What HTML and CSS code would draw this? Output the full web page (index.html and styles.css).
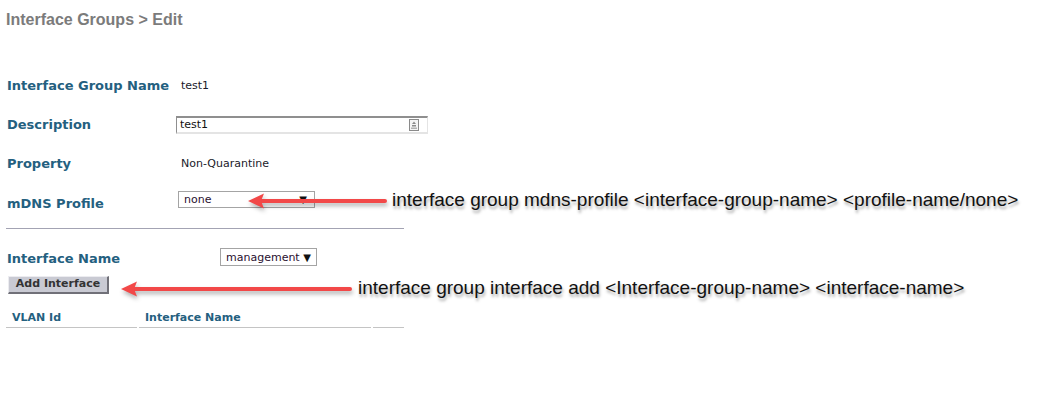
FILE: index.html
```html
<!DOCTYPE html>
<html>
<head>
<meta charset="utf-8">
<link rel="stylesheet" href="styles.css">
</head>
<body>
<div class="page">
  <h1 class="title">Interface Groups &gt; Edit</h1>
  <div class="form">
    <div class="row">
      <div class="label">Interface Group Name</div>
      <div class="value val-text">test1</div>
    </div>
    <div class="row">
      <div class="label">Description</div>
      <div class="value">
        <div class="textbox">
          <span>test1</span>
          <svg class="tb-icon" width="10" height="12" viewBox="0 0 10 12">
            <rect x="0.5" y="0.5" width="9" height="11" fill="#f4f4f4" stroke="#8a8a8a"/>
            <path d="M5 2.5 L7 5 L3 5 Z" fill="#8a8a8a"/>
            <rect x="3" y="6" width="4" height="1.5" fill="#8a8a8a"/>
            <rect x="2" y="8.5" width="6" height="1.5" fill="#b0b0b0"/>
          </svg>
        </div>
      </div>
    </div>
    <div class="row">
      <div class="label">Property</div>
      <div class="value val-text">Non-Quarantine</div>
    </div>
    <div class="row row-mdns">
      <div class="label">mDNS Profile</div>
      <div class="value">
        <div class="select sel-mdns"><span>none</span><span class="caret">▼</span></div>
      </div>
    </div>
  </div>
  <div class="divider"></div>
  <div class="iface-row">
    <div class="label">Interface Name</div>
    <div class="select sel-iface"><span>management</span><span class="caret">▼</span></div>
  </div>
  <div class="btn-row">
    <button class="btn">Add Interface</button>
  </div>
  <div class="table-head">
    <div class="th th-vlan">VLAN Id</div>
    <div class="th th-name">Interface Name</div>
    <div class="th th-extra"></div>
  </div>

  <div class="note note-1">interface group mdns-profile &lt;interface-group-name&gt; &lt;profile-name/none&gt;</div>
  <div class="note note-2">interface group interface add &lt;Interface-group-name&gt; &lt;interface-name&gt;</div>
  <svg class="arrow arrow-1" width="150" height="24" viewBox="0 0 150 24">
    <line x1="10" y1="11" x2="137" y2="11" stroke="#f24848" stroke-width="4" stroke-linecap="round"/>
    <path d="M0 11 L16 3.5 L13 11 L16 18.5 Z" fill="#f24848"/>
  </svg>
  <svg class="arrow arrow-2" width="240" height="24" viewBox="0 0 240 24">
    <line x1="10" y1="11" x2="229" y2="11" stroke="#f24848" stroke-width="4" stroke-linecap="round"/>
    <path d="M0 11 L16 3.5 L13 11 L16 18.5 Z" fill="#f24848"/>
  </svg>
</div>
</body>
</html>
```

FILE: styles.css
```css
html, body {
  margin: 0;
  padding: 0;
  background: #ffffff;
}
.page {
  position: relative;
  width: 1048px;
  height: 412px;
  font-family: "DejaVu Sans", Verdana, sans-serif;
}
.title {
  margin: 0;
  padding: 10px 0 0 6px;
  font-family: "Liberation Sans", Arial, sans-serif;
  font-size: 16px;
  font-weight: bold;
  color: #7b7b7b;
  line-height: 19px;
}
.form {
  margin-top: 37px;
  padding-left: 7px;
  display: flex;
  flex-direction: column;
}
.row {
  display: flex;
  align-items: center;
  height: 39px;
}
.label {
  width: 169px;
  font-size: 13px;
  font-weight: bold;
  color: #24607f;
}
.value {
  display: flex;
  align-items: center;
}
.val-text {
  padding-left: 5px;
  font-size: 11px;
  color: #1a1a2a;
}
.textbox {
  box-sizing: border-box;
  width: 252px;
  height: 18px;
  border-top: 2px solid #8f8f8f;
  border-left: 1px solid #8f8f8f;
  border-right: 1px solid #e4e4e4;
  border-bottom: 2px solid #e4e4e4;
  display: flex;
  align-items: center;
  justify-content: space-between;
  padding: 0 8px 0 3px;
  font-size: 11px;
  color: #111;
}
.tb-icon {
  display: block;
}
.select {
  box-sizing: border-box;
  border: 1px solid #a4a4a4;
  background: #fff;
  display: flex;
  align-items: center;
  justify-content: space-between;
  font-size: 11px;
  color: #2a1030;
}
.caret {
  font-size: 10px;
  color: #111;
}
.sel-mdns {
  width: 137px;
  height: 17px;
  margin-left: 2px;
  padding: 0 7px 0 5px;
  margin-top: -6px;
}
.row-mdns .label {
  padding-top: 2px;
}
.divider {
  margin: 6px 0 0 6px;
  width: 398px;
  height: 1px;
  background: #a3a3b3;
}
.iface-row {
  display: flex;
  align-items: center;
  padding-left: 7px;
  margin-top: 19px;
  height: 18px;
}
.iface-row .label {
  width: 213px;
  padding-top: 2px;
}
.sel-iface {
  width: 97px;
  height: 18px;
  padding: 0 5px 0 5px;
  margin-top: 0;
}
.btn-row {
  padding-left: 8px;
  margin-top: 6px;
}
.btn {
  box-sizing: border-box;
  width: 101px;
  height: 18px;
  padding: 0;
  margin: 0;
  background: #c9cad3;
  border-top: 1px solid #ececf0;
  border-left: 1px solid #ececf0;
  border-right: 2px solid #707078;
  border-bottom: 2px solid #707078;
  font-family: "DejaVu Sans", Verdana, sans-serif;
  font-size: 11px;
  font-weight: bold;
  color: #333;
  line-height: 14px;
}
.table-head {
  display: flex;
  margin: 16px 0 0 6px;
  width: 398px;
  gap: 2px;
}
.th {
  box-sizing: border-box;
  height: 18px;
  border-bottom: 1px solid #c4c4c4;
  font-size: 11px;
  font-weight: bold;
  color: #24607f;
  line-height: 14px;
  padding-top: 1px;
}
.th-vlan {
  width: 131px;
  padding-left: 6px;
}
.th-name {
  width: 232px;
  padding-left: 6px;
}
.th-extra {
  width: 31px;
}
.note {
  position: absolute;
  font-family: "Liberation Sans", Arial, sans-serif;
  font-size: 19px;
  color: #111;
  white-space: nowrap;
  text-shadow: 1px 3px 3px rgba(0, 0, 0, 0.35);
  line-height: 22px;
}
.note-1 {
  left: 392px;
  top: 189px;
}
.note-2 {
  left: 358px;
  top: 277px;
}
.arrow {
  position: absolute;
  overflow: visible;
  filter: drop-shadow(1px 3px 2px rgba(0, 0, 0, 0.3));
}
.arrow-1 {
  left: 248px;
  top: 190px;
}
.arrow-2 {
  left: 121px;
  top: 278px;
}
```
